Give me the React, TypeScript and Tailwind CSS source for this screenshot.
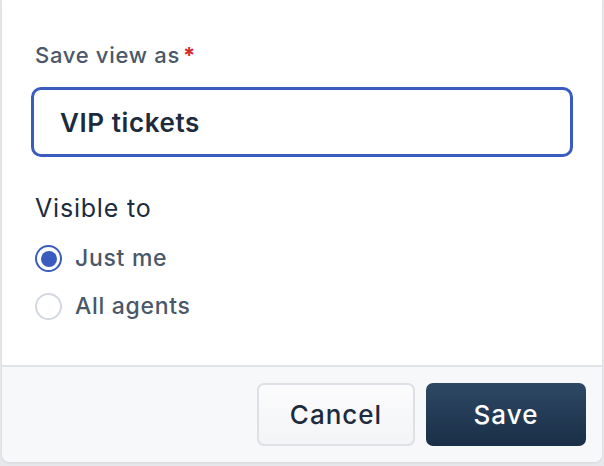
export default function App() {
  return (
    <div className="w-[604px] h-[466px] bg-[#e6e8eb] overflow-hidden pl-[2px] font-['Inter','Noto_Sans',sans-serif]">
      <div className="w-[600px] h-[462px] bg-white rounded-b-[8px] flex flex-col overflow-hidden shadow-[0_1px_3px_rgba(0,0,0,0.08)]">
        {/* Body */}
        <div className="flex-1 px-[29px] pt-[40px]">
          <label className="flex items-start pl-[4px] text-[22px] leading-[30px] tracking-[0.7px] font-medium text-[#4a5868]">
            Save view as
            <span className="ml-[3px] text-[#d42c2c] font-bold">*</span>
          </label>
          <div className="mt-[17px] h-[70px] w-[542px] rounded-[10px] border-[3px] border-[#3a5cbf] flex items-center pl-[26px]">
            <span className="text-[26px] font-semibold text-[#1c2b3d] tracking-[0.6px]">VIP tickets</span>
          </div>
          <div className="mt-[36px] pl-[4px] text-[25px] leading-[30px] tracking-[0.8px] text-[#1c2b3d]">Visible to</div>
          <div className="mt-[22px] flex flex-col gap-[21px] pl-[4px]">
            <div className="flex items-center gap-[13px]">
              <span className="w-[27px] h-[27px] rounded-full border-[2px] border-[#3a5cbf] flex items-center justify-center">
                <span className="w-[16px] h-[16px] rounded-full bg-[#3a5cbf]" />
              </span>
              <span className="text-[23px] leading-[27px] tracking-[0.7px] font-medium text-[#4a5868]">Just me</span>
            </div>
            <div className="flex items-center gap-[13px]">
              <span className="w-[27px] h-[27px] rounded-full border-[2px] border-[#d3d8df]" />
              <span className="text-[23px] leading-[27px] tracking-[0.7px] font-medium text-[#4a5868]">All agents</span>
            </div>
          </div>
        </div>
        {/* Footer */}
        <div className="h-[97px] border-t-[2px] border-[#e0e3e7] bg-[#f7f8fa] flex items-start justify-end gap-[11px] pt-[16px] pr-[16px]">
          <button className="w-[158px] h-[63px] rounded-[7px] border-[2px] border-[#dde0e5] bg-gradient-to-b from-[#fcfcfd] to-[#f3f4f6] text-[26px] tracking-[1px] font-medium text-[#1c2b3d]">
            Cancel
          </button>
          <button className="w-[160px] h-[63px] rounded-[7px] bg-gradient-to-b from-[#2e4864] to-[#1a2f47] text-[26px] tracking-[1px] font-medium text-white">
            Save
          </button>
        </div>
      </div>
    </div>
  );
}
